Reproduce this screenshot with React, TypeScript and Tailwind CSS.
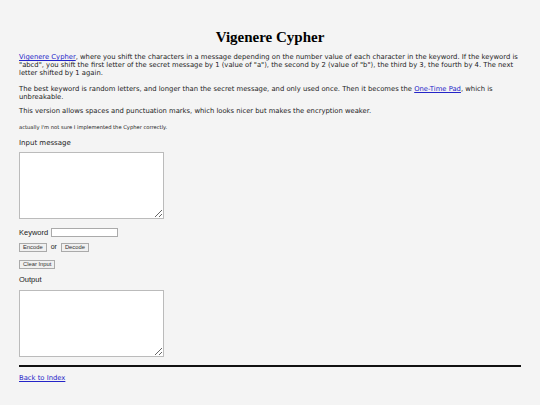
import { useState } from "react"

const SERIF = "font-['Liberation_Serif',_'Times_New_Roman',serif]"
const VERDANA = "font-['DejaVu_Sans',Verdana,sans-serif]"
const ARIAL = "font-['Liberation_Sans',Arial,sans-serif]"

export default function App() {
  const [message, setMessage] = useState("")
  const [keyword, setKeyword] = useState("")
  const [output, setOutput] = useState("")

  const shift = (dir: 1 | -1) => {
    const key = keyword.toLowerCase().replace(/[^a-z]/g, "")
    if (!key) return
    let k = 0
    const res = message
      .split("")
      .map((ch) => {
        const code = ch.charCodeAt(0)
        const n = (key.charCodeAt(k % key.length) - 96) * dir
        if (/[a-z]/.test(ch)) {
          k++
          return String.fromCharCode(((code - 97 + n + 26 * 26) % 26) + 97)
        }
        if (/[A-Z]/.test(ch)) {
          k++
          return String.fromCharCode(((code - 65 + n + 26 * 26) % 26) + 65)
        }
        return ch
      })
      .join("")
    setOutput(res)
  }

  return (
    <div className="min-h-[405px] bg-[#f4f4f4] text-[#222]">
      <div className="px-[19px] pt-[28px] pb-6">
        <h1 className={`${SERIF} text-center text-[15px] leading-[18px] font-bold text-black`}>
          Vigenere Cypher
        </h1>

        <p className={`${VERDANA} mt-[7px] text-[6.8px] leading-[8px]`}>
          <a href="#" className="text-[#2424c8] underline">
            Vigenere Cypher
          </a>
          , where you shift the characters in a message depending on the number value of each
          character in the keyword. If the keyword is "abcd", you shift the first letter of the
          secret message by 1 (value of "a"), the second by 2 (value of "b"), the third by 3, the
          fourth by 4. The next letter shifted by 1 again.
        </p>

        <p className={`${VERDANA} mt-[8px] text-[6.8px] leading-[8px]`}>
          The best keyword is random letters, and longer than the secret message, and only used
          once. Then it becomes the{" "}
          <a href="#" className="text-[#2424c8] underline">
            One-Time Pad
          </a>
          , which is unbreakable.
        </p>

        <p className={`${VERDANA} mt-[6px] text-[6.8px] leading-[8px]`}>
          This version allows spaces and punctuation marks, which looks nicer but makes the
          encryption weaker.
        </p>

        <p className={`${VERDANA} mt-[9px] text-[5.2px] leading-[7px]`}>
          actually I'm not sure I implemented the Cypher correctly.
        </p>

        <div className={`${VERDANA} mt-[8px] text-[7px] leading-[8px]`}>Input message</div>
        <textarea
          value={message}
          onChange={(e) => setMessage(e.target.value)}
          className="mt-[5px] block h-[67px] w-[145px] border border-[#bbb] bg-white"
        />

        <div className={`${ARIAL} mt-[9px] flex h-[9px] items-center gap-[3px] text-[7.5px]`}>
          <span>Keyword</span>
          <input
            value={keyword}
            onChange={(e) => setKeyword(e.target.value)}
            className="h-[9px] w-[67px] border border-[#aaa] bg-white"
          />
        </div>

        <div className={`${ARIAL} mt-[6px] flex h-[9px] items-center gap-[4px] text-[7px]`}>
          <Btn onClick={() => shift(1)}>Encode</Btn>
          <span>or</span>
          <Btn onClick={() => shift(-1)}>Decode</Btn>
        </div>

        <div className={`${ARIAL} mt-[8px] flex h-[9px]`}>
          <Btn
            onClick={() => {
              setMessage("")
              setKeyword("")
            }}
          >
            Clear Input
          </Btn>
        </div>

        <div className={`${ARIAL} mt-[7px] text-[7.5px] leading-[8px]`}>Output</div>
        <textarea
          value={output}
          readOnly
          className="mt-[6px] block h-[67px] w-[145px] border border-[#bbb] bg-white"
        />

        <hr className="mt-[8px] border-0 border-t-2 border-[#111]" />

        <a
          href="#"
          className={`${VERDANA} mt-[7px] block w-fit text-[6.8px] leading-[8px] text-[#2424c8] underline`}
        >
          Back to Index
        </a>
      </div>
    </div>
  )
}

function Btn({ children, onClick }: { children: React.ReactNode; onClick: () => void }) {
  return (
    <button
      onClick={onClick}
      className="h-[9px] border border-[#aaa] bg-[#f0f0f0] px-[3px] text-[5.8px] leading-[7px] text-[#333]"
    >
      {children}
    </button>
  )
}
